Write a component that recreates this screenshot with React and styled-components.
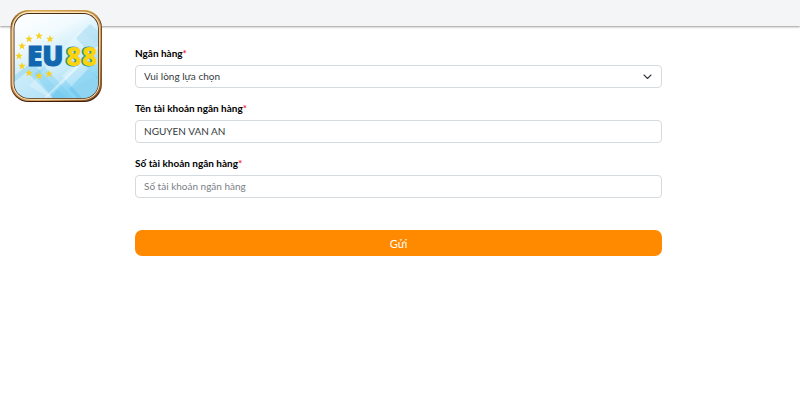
import React from 'react';
import styled, { createGlobalStyle } from 'styled-components';

const GlobalStyle = createGlobalStyle`
  * {
    box-sizing: border-box;
  }

  body {
    margin: 0;
    background: #fff;
    color: #212529;
    font-family: Lato, 'Noto Sans', sans-serif;
    font-size: 10px;
  }
`;

const Header = styled.header`
  height: 26px;
  padding: 10px;
  background: #f3f5f7;
  box-shadow: 0 1px 2px rgba(0, 0, 0, 0.4);
`;

const LogoLink = styled.a`
  display: block;
  position: relative;
  z-index: 1;
  width: 93px;
  height: 93px;

  svg {
    display: block;
  }
`;

const Form = styled.form`
  display: flex;
  flex-direction: column;
  gap: 12px;
  padding: 19px 138px 40px 135px;
`;

const Field = styled.div`
  display: flex;
  flex-direction: column;
  gap: 4px;
`;

const Label = styled.label`
  color: #000;
  font-weight: 700;
  line-height: 16px;

  span {
    color: #f0283c;
  }
`;

const Input = styled.input`
  width: 100%;
  height: 23px;
  padding: 0 8px 2px;
  border: 1px solid #d5dade;
  border-radius: 4px;
  background: #fff;
  color: #343a40;
  font: inherit;

  &::placeholder {
    color: #7b8187;
    opacity: 1;
  }
`;

const SelectBox = styled.div`
  position: relative;

  svg {
    position: absolute;
    top: 8px;
    right: 10px;
    pointer-events: none;
  }
`;

const Select = styled(Input)`
  display: block;
  appearance: none;
`;

const SubmitButton = styled.button`
  height: 26px;
  margin-top: 20px;
  border: 0;
  border-radius: 7px;
  background: #ff8a00;
  color: #fff;
  font: inherit;
  font-size: 11px;
  cursor: pointer;
`;

const stars = [
  [39, 36],
  [29, 39],
  [50, 39],
  [22, 46],
  [19, 56],
  [22, 66],
  [29, 73],
  [39, 76],
  [49, 74],
];

const Logo = () => (
  <svg width="93" height="93" viewBox="10 10 93 93" aria-hidden="true">
    <defs>
      <linearGradient id="frame" x1="0" y1="0" x2="1" y2="1">
        <stop offset="0" stopColor="#5a3212" />
        <stop offset="0.12" stopColor="#d8a553" />
        <stop offset="0.4" stopColor="#b87838" />
        <stop offset="0.65" stopColor="#d9a566" />
        <stop offset="1" stopColor="#7b451d" />
      </linearGradient>
      <linearGradient id="edge" x1="0" y1="0" x2="0" y2="1">
        <stop offset="0" stopColor="#e2b04c" />
        <stop offset="0.15" stopColor="#5d3416" />
        <stop offset="0.8" stopColor="#8a5027" />
        <stop offset="1" stopColor="#3b1a08" />
      </linearGradient>
      <linearGradient id="sky" x1="0" y1="0" x2="0.5" y2="1">
        <stop offset="0" stopColor="#fff" />
        <stop offset="0.35" stopColor="#f1fafe" />
        <stop offset="0.7" stopColor="#bfe8f9" />
        <stop offset="1" stopColor="#8ad5f4" />
      </linearGradient>
      <clipPath id="inner">
        <rect x="14.5" y="14" width="83.5" height="84" rx="14.5" />
      </clipPath>
      <polygon
        id="star"
        points="0,-4 1,-1.2 3.8,-1.2 1.6,0.6 2.4,3.3 0,1.7 -2.4,3.3 -1.6,0.6 -3.8,-1.2 -1,-1.2"
        fill="#f9cf20"
      />
    </defs>
    <rect x="10.5" y="10" width="91.5" height="92" rx="18" fill="url(#edge)" />
    <rect x="11.2" y="10.6" width="90" height="90.4" rx="17.5" fill="url(#frame)" />
    <rect x="12.3" y="11.6" width="87.5" height="88.2" rx="16.5" fill="#fbe6b4" />
    <rect x="13.6" y="13" width="85.2" height="85.8" rx="15.5" fill="#4b2d16" />
    <g clipPath="url(#inner)">
      <rect x="14" y="14" width="84" height="84" fill="url(#sky)" />
      <path d="M14 76 L32 62 L66 98 L14 98 Z" fill="#64c3eb" opacity="0.3" />
      <path d="M14 82 L27 72 L53 98 L14 98 Z" fill="#fff" opacity="0.4" />
      <path d="M29 86 L80 30 L98 45 L50 98 Z" fill="#fff" opacity="0.25" />
      <path d="M34 74 L44 66 L73 98 L53 98 Z" fill="#6bc6ec" opacity="0.3" />
      <path d="M62 76 L79 60 L98 79 L98 98 L82 98 Z" fill="#fff" opacity="0.3" />
      <path d="M69 89 L88 69 L98 78 L98 98 L77 98 Z" fill="#4bb8e8" opacity="0.3" />
      <path d="M76 38 L90 24 L98 31 L98 47 L86 49 Z" fill="#a3daf2" opacity="0.5" />
      <path d="M45 98 L98 47" stroke="#fff" strokeWidth="2" opacity="0.4" />
    </g>
    {stars.map(([x, y]) => (
      <use key={`${x}-${y}`} href="#star" x={x} y={y} />
    ))}
    <g fontFamily="Open Sans, sans-serif" fontWeight="800">
      <text x="27" y="66" fontSize="28" fill="#1266ae" stroke="#1266ae">EU</text>
      <text x="65" y="66" fontSize="27" fill="#2a91a0" stroke="#2a91a0">88</text>
      <text x="66" y="66" fontSize="27" fill="#fbd40d">88</text>
    </g>
  </svg>
);

const Required = () => <span>*</span>;

const App = () => (
  <>
    <GlobalStyle />
    <Header>
      <LogoLink href="#" aria-label="EU88">
        <Logo />
      </LogoLink>
    </Header>
    <Form onSubmit={(e) => e.preventDefault()}>
      <Field>
        <Label htmlFor="bank">Ngân hàng<Required /></Label>
        <SelectBox>
          <Select as="select" id="bank" defaultValue="">
            <option value="">Vui lòng lựa chọn</option>
          </Select>
          <svg width="9" height="8" viewBox="0 0 9 8" fill="none" aria-hidden="true">
            <path d="M1 2 L4.5 5.5 L8 2" stroke="#343a40" strokeWidth="1.1" strokeLinecap="round" strokeLinejoin="round" />
          </svg>
        </SelectBox>
      </Field>
      <Field>
        <Label htmlFor="accountName">Tên tài khoản ngân hàng<Required /></Label>
        <Input id="accountName" defaultValue="NGUYEN VAN AN" />
      </Field>
      <Field>
        <Label htmlFor="accountNumber">Số tài khoản ngân hàng<Required /></Label>
        <Input id="accountNumber" placeholder="Số tài khoản ngân hàng" />
      </Field>
      <SubmitButton type="submit">Gửi</SubmitButton>
    </Form>
  </>
);

export default App;
